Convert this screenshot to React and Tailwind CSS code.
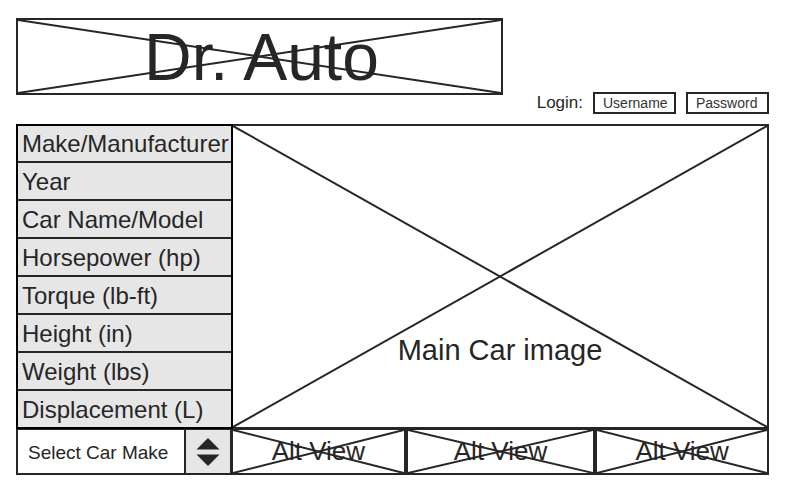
const specs = [
  'Make/Manufacturer',
  'Year',
  'Car Name/Model',
  'Horsepower (hp)',
  'Torque (lb-ft)',
  'Height (in)',
  'Weight (lbs)',
  'Displacement (L)',
];

// Diagonal lines that mark an image placeholder.
function Cross() {
  return (
    <svg
      aria-hidden="true"
      className="pointer-events-none absolute inset-0 h-full w-full stroke-[#262626] stroke-2"
    >
      <line x1="0" y1="0" x2="100%" y2="100%" />
      <line x1="0" y1="100%" x2="100%" y2="0" />
    </svg>
  );
}

function LoginField({ label, type }) {
  return (
    <input
      type={type}
      aria-label={label}
      placeholder={label}
      className="h-[22px] w-[83px] border-2 border-[#262626] bg-white pl-2 text-sm leading-4 text-[#262626] outline-none placeholder:text-[#333333]"
    />
  );
}

function AltView({ className }) {
  return (
    <div className={`relative flex items-center justify-center border-2 border-[#262626] pb-0.5 ${className}`}>
      <Cross />
      <span className="text-[26px] leading-8">Alt View</span>
    </div>
  );
}

export default function App() {
  return (
    <div className="bg-white pt-[18px] pr-[17px] pb-6 pl-4 font-['Liberation_Sans',Arial,sans-serif] text-[#262626]">
      <header className="flex h-24 items-start justify-between">
        <div className="relative flex h-[77px] w-[487px] items-center justify-center border-2 border-[#262626] pl-1">
          <Cross />
          <h1 className="text-[66px] leading-[72px]">Dr. Auto</h1>
        </div>
        <form className="flex items-center gap-[10px] self-end">
          <span className="text-[17px] leading-5">Login:</span>
          <LoginField label="Username" type="text" />
          <LoginField label="Password" type="password" />
        </form>
      </header>

      <main className="mt-[10px]">
        <div className="flex">
          <ul className="z-10 w-[217px] shrink-0 divide-y-2 divide-[#262626] border-2 border-black bg-[#e6e6e6]">
            {specs.map((name) => (
              <li
                key={name}
                className="box-content h-[35px] pt-px pl-1 text-2xl leading-9 whitespace-nowrap first:pt-0"
              >
                {name}
              </li>
            ))}
          </ul>
          <div className="relative -ml-0.5 flex flex-1 items-end justify-center border-2 border-[#262626] pb-[59px]">
            <Cross />
            <span className="text-[29px] leading-9">Main Car image</span>
          </div>
        </div>

        <div className="-mt-px flex h-[47px]">
          <div className="relative w-[216px] shrink-0">
            <select
              aria-label="Select Car Make"
              className="h-full w-full appearance-none border-2 border-[#262626] bg-white pt-0.5 pr-12 pl-[10px] text-[19px] leading-6 text-[#262626] outline-none"
            >
              <option>Select Car Make</option>
            </select>
            <div className="pointer-events-none absolute inset-y-0 right-0 flex w-12 items-center justify-center border-2 border-[#262626] bg-[#e6e6e6]">
              <svg viewBox="0 0 24 28" className="h-7 w-6 fill-[#262626]" aria-hidden="true">
                <path d="M12 0 L23.5 11.5 H0.5 Z" />
                <path d="M0.5 16.5 H23.5 L12 28 Z" />
              </svg>
            </div>
          </div>
          <AltView className="-ml-px flex-[175]" />
          <AltView className="flex-[190]" />
          <AltView className="flex-[174]" />
        </div>
      </main>
    </div>
  );
}
